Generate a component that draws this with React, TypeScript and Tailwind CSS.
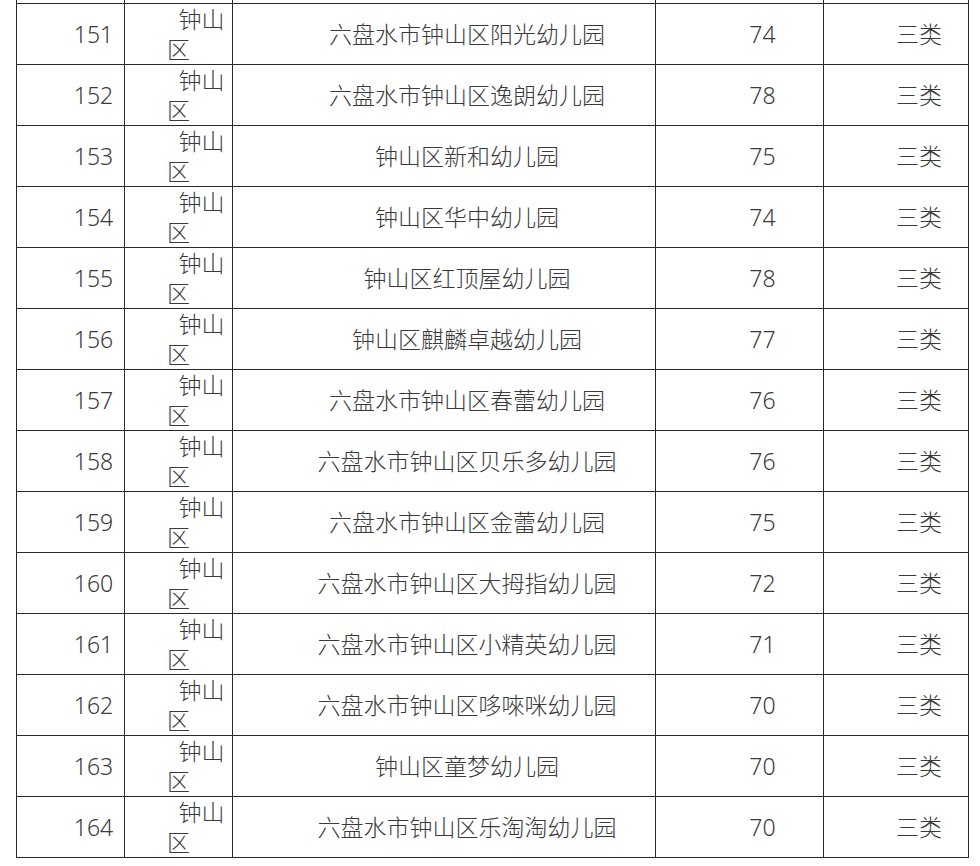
const rows = [
  { no: 151, name: '六盘水市钟山区阳光幼儿园', score: 74 },
  { no: 152, name: '六盘水市钟山区逸朗幼儿园', score: 78 },
  { no: 153, name: '钟山区新和幼儿园', score: 75 },
  { no: 154, name: '钟山区华中幼儿园', score: 74 },
  { no: 155, name: '钟山区红顶屋幼儿园', score: 78 },
  { no: 156, name: '钟山区麒麟卓越幼儿园', score: 77 },
  { no: 157, name: '六盘水市钟山区春蕾幼儿园', score: 76 },
  { no: 158, name: '六盘水市钟山区贝乐多幼儿园', score: 76 },
  { no: 159, name: '六盘水市钟山区金蕾幼儿园', score: 75 },
  { no: 160, name: '六盘水市钟山区大拇指幼儿园', score: 72 },
  { no: 161, name: '六盘水市钟山区小精英幼儿园', score: 71 },
  { no: 162, name: '六盘水市钟山区哆唻咪幼儿园', score: 70 },
  { no: 163, name: '钟山区童梦幼儿园', score: 70 },
  { no: 164, name: '六盘水市钟山区乐淘淘幼儿园', score: 70 },
]

const cell = 'border border-[#2a2a2a] p-0 text-center indent-[2em] align-middle'

export default function App() {
  return (
    <div
      className="min-h-[866px] bg-white pl-[16px] text-[23px] font-light leading-[30px] text-[#3a3a3a]"
      style={{ fontFamily: '"Noto Sans", "Noto Sans CJK SC", sans-serif' }}
    >
      <table className="w-[952px] table-fixed border-collapse">
        <colgroup>
          <col className="w-[108px]" />
          <col className="w-[108px]" />
          <col className="w-[423px]" />
          <col className="w-[168px]" />
          <col className="w-[145px]" />
        </colgroup>
        <tbody>
          {/* tail of the previous row, cut off by the top edge */}
          <tr>
            {[0, 1, 2, 3, 4].map((i) => (
              <td key={i} className="h-[3px] border-x border-t-0 border-b border-[#2a2a2a] p-0" />
            ))}
          </tr>
          {rows.map((r) => (
            <tr key={r.no}>
              <td className={cell}>{r.no}</td>
              <td className={cell}>钟山区</td>
              <td className={cell}>{r.name}</td>
              <td className={cell}>{r.score}</td>
              <td className={cell}>三类</td>
            </tr>
          ))}
        </tbody>
      </table>
    </div>
  )
}
